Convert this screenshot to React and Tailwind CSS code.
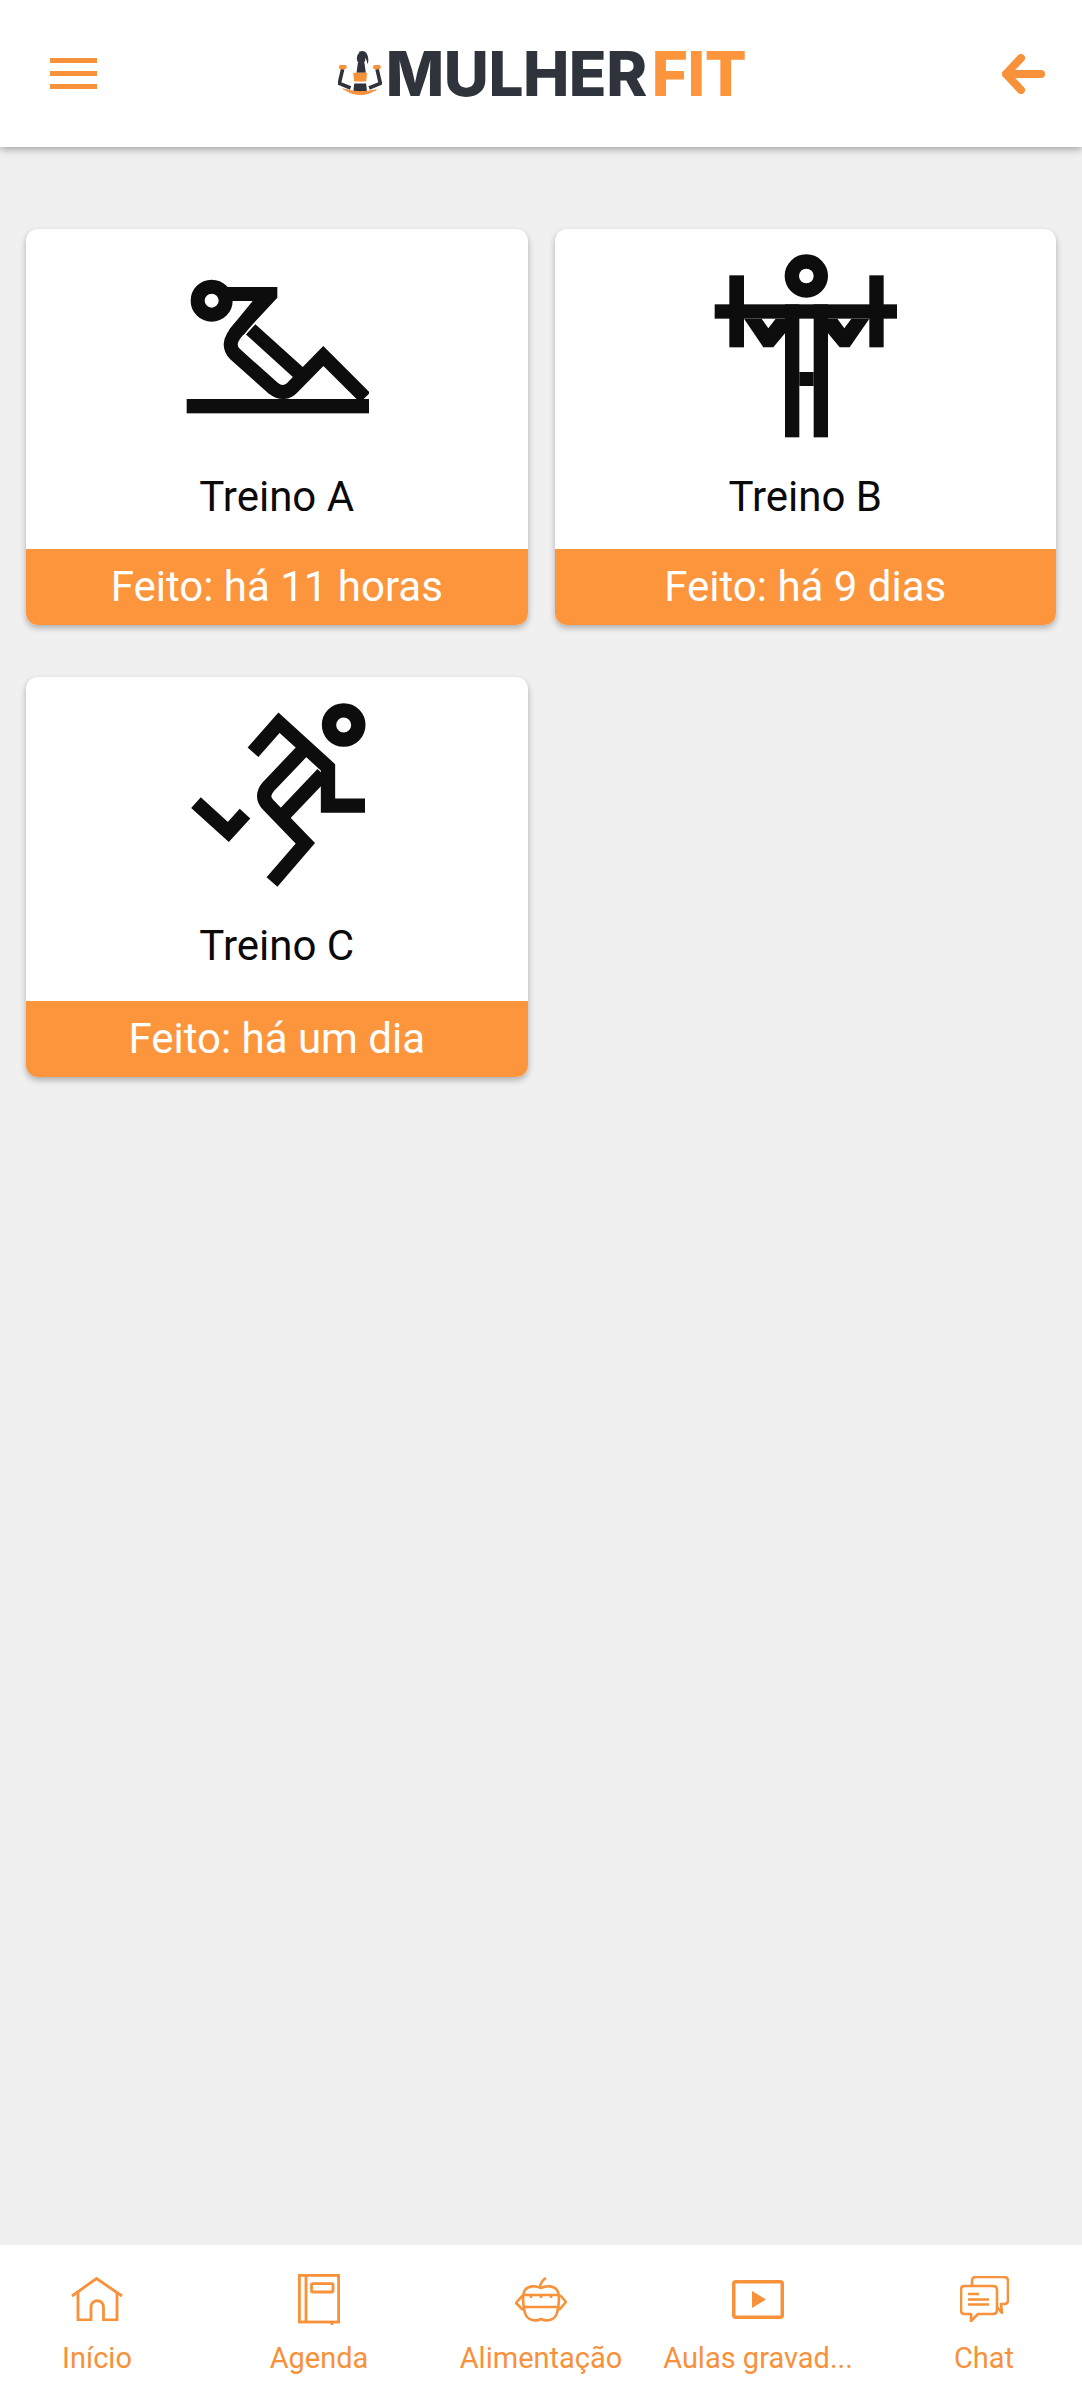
const workouts = [
  { name: "Treino A", done: "Feito: há 11 horas", icon: <SitUpIcon />, size: "h-[396px]", top: "pt-[25px]" },
  { name: "Treino B", done: "Feito: há 9 dias", icon: <WeightsIcon />, size: "h-[396px]", top: "pt-[25px]" },
  { name: "Treino C", done: "Feito: há um dia", icon: <RunnerIcon />, size: "h-[400px]", top: "pt-[26px]" },
];

function SitUpIcon() {
  return (
    <svg viewBox="0 0 552 552" className="block w-[184px] h-[184px]">
      <g transform="translate(-75 -12)" fill="none" stroke="#0d0d0d" strokeWidth="42">
        <circle cx="155" cy="152" r="42" />
        <path d="M200 111H352V143L285 215L250 255L207 240L278 153H200Z" fill="#0d0d0d" stroke="none" />
        <path d="M245 228Q212 262 212 283Q212 300 225 312L340 415Q372 440 400 410L490 318L615 443" />
        <path d="M272 238L420 372" />
        <rect x="80" y="447" width="550" height="43" fill="#0d0d0d" stroke="none" />
      </g>
    </svg>
  );
}

function WeightsIcon() {
  return (
    <svg viewBox="0 0 552 552" className="block w-[184px] h-[184px]">
      <g transform="translate(-67 -42)" fill="#0d0d0d">
        <circle cx="347" cy="108" r="43.5" fill="none" stroke="#0d0d0d" strokeWidth="43" />
        <rect x="72" y="193" width="550" height="43" />
        <rect x="116" y="106" width="44" height="216" />
        <rect x="536" y="106" width="43" height="216" />
        <rect x="283" y="193" width="43" height="399" />
        <rect x="369" y="193" width="43" height="399" />
        <rect x="326" y="396" width="43" height="42" />
        <path fillRule="evenodd" d="M160 236L218 322H248L283 280V236ZM213 236H255L233 265Z" />
        <path fillRule="evenodd" d="M412 236V280L447 322H477L536 236ZM440 236H482L461 265Z" />
      </g>
    </svg>
  );
}

function RunnerIcon() {
  return (
    <svg viewBox="0 0 552 552" className="block w-[184px] h-[184px]">
      <g transform="translate(-45 -39)" fill="none" stroke="#0d0d0d" strokeWidth="43">
        <circle cx="521" cy="105" r="44" />
        <path d="M249 187L327 98L474 232V347H585" />
        <path d="M395 185L295 290Q270 320 295 345L406 460L306 576" />
        <path d="M458 252L342 374" />
        <path d="M78 338L175 426L225 371" />
      </g>
    </svg>
  );
}

function LogoFigure() {
  return (
    <svg viewBox="0 0 133 140" className="block w-[44px] h-[47px]">
      <path d="M62 5Q78 -3 86 8Q95 22 90 42L84 24Z" fill="#2f333b" />
      <ellipse cx="70" cy="24" rx="13" ry="18" fill="#2f333b" />
      <path d="M60 38H80L84 68H56Z" fill="#2f333b" />
      <path d="M14 57L4 100L38 114M118 57L128 100L94 114" fill="none" stroke="#2f333b" strokeWidth="11" strokeLinejoin="round" />
      <path d="M46 68H88L85 94H49Z" fill="#f7913a" />
      <path d="M49 100H85L88 128H46Z" fill="#2f333b" />
      <path d="M16 117Q66 150 116 119Q66 132 16 117Z" fill="#f7913a" stroke="#f7913a" strokeWidth="3" />
      <rect x="3" y="44" width="23" height="13" rx="5" fill="#f7913a" />
      <rect x="106" y="44" width="23" height="13" rx="5" fill="#f7913a" />
    </svg>
  );
}

function HomeIcon() {
  return (
    <svg viewBox="0 0 52 44" fill="none" stroke="#f7913a" strokeWidth="2.8" className="w-[52px] h-[44px]">
      <path d="M1 19L25.5 1.5L51 19" />
      <path d="M7 15V43H20V30A6.2 6.2 0 0 1 32.5 30V43H46V15" />
    </svg>
  );
}

function BookIcon() {
  return (
    <svg viewBox="0 0 42 51" fill="none" stroke="#f7913a" strokeWidth="2.8" className="w-[42px] h-[51px]">
      <rect x="1.4" y="1.4" width="39.2" height="46.6" />
      <path d="M8 1.4V48M34 48V51" />
      <rect x="13.5" y="9.7" width="21.5" height="8.3" rx="1" />
    </svg>
  );
}

function AppleIcon() {
  return (
    <svg viewBox="0 0 52 45" fill="none" stroke="#f7913a" strokeWidth="2.6" strokeLinejoin="round" className="w-[52px] h-[45px]">
      <path d="M25 10Q26 4 31 1" />
      <path d="M26 11C20 8 13 9 10 13C7 17 8 30 10 36C12 43 20 45 26 42C32 45 40 43 42 36C44 30 45 17 42 13C39 9 32 8 26 11Z" />
      <path d="M9 18H44M9 30H44M16 18V21M26 18V21M36 18V21" />
      <path d="M8 18L1 26L8 33M45 18L51 25L44 33" />
    </svg>
  );
}

function PlayIcon() {
  return (
    <svg viewBox="0 0 52 39" fill="none" className="w-[52px] h-[39px]">
      <rect x="1.75" y="1.75" width="48.5" height="35.5" rx="2" stroke="#f7913a" strokeWidth="3.5" />
      <path d="M20 11L34 19.5L20 28Z" fill="#f7913a" />
    </svg>
  );
}

function ChatIcon() {
  return (
    <svg viewBox="0 0 49 46" fill="none" stroke="#f7913a" strokeWidth="2.6" strokeLinejoin="round" className="w-[49px] h-[46px]">
      <path d="M4 10H33Q37 10 37 14V34Q37 38 33 38H18L11 45V38H4Q1 38 1 34V14Q1 10 4 10Z" />
      <path d="M12 10V5Q12 1 16 1H44Q48 1 48 5V24Q48 28 44 28H41L42 37L37 31" />
      <path d="M8 18H19M8 23.5H29M8 28.5H29" />
    </svg>
  );
}

const navItems = [
  { label: "Início", icon: <HomeIcon />, box: "" },
  { label: "Agenda", icon: <BookIcon />, box: "" },
  { label: "Alimentação", icon: <AppleIcon />, box: "" },
  { label: "Aulas gravad...", icon: <PlayIcon />, box: "" },
  { label: "Chat", icon: <ChatIcon />, box: "pl-2" },
];

function WorkoutCard({ name, done, icon, size, top }) {
  return (
    <div className={`flex flex-col ${size} bg-white rounded-[12px] overflow-hidden shadow-[0_3px_6px_rgba(0,0,0,0.28)]`}>
      <div className={`flex-1 flex flex-col items-center ${top}`}>
        {icon}
        <div className="mt-[35px] text-[42px] leading-[48px] text-[#0a0a0a]">{name}</div>
      </div>
      <div className="h-[76px] flex items-center justify-center bg-[#fc953c] text-white text-[42px] leading-none">
        {done}
      </div>
    </div>
  );
}

export default function App() {
  return (
    <div className="h-[2402px] flex flex-col bg-[#f0f0f0] font-['Roboto',sans-serif]">
      <header className="relative z-10 h-[147px] shrink-0 bg-white flex items-center justify-between pl-[50px] pr-[37px] shadow-[0_2px_8px_rgba(0,0,0,0.35)]">
        <div className="flex flex-col gap-[8px] w-[47px]">
          <div className="h-[5px] bg-[#f7913a]" />
          <div className="h-[5px] bg-[#f7913a]" />
          <div className="h-[5px] bg-[#f7913a]" />
        </div>
        <div className="flex items-center ml-[-14px] font-['Inter',sans-serif] font-extrabold text-[62px] leading-none tracking-[-0.5px]">
          <LogoFigure />
          <span className="ml-[4px] text-[#2f333b]">MULHER</span>
          <span className="ml-[5px] text-[#fc953c]">FIT</span>
        </div>
        <svg viewBox="0 0 44 40" fill="none" stroke="#f7913a" strokeWidth="8" strokeLinecap="round" strokeLinejoin="round" className="w-[44px] h-[40px]">
          <path d="M5 20H40M20 4L5 20L20 36" />
        </svg>
      </header>

      <main className="flex-1 px-[26px] pt-[82px]">
        <div className="grid grid-cols-2 gap-x-[27px] gap-y-[52px]">
          {workouts.map((w) => (
            <WorkoutCard key={w.name} {...w} />
          ))}
        </div>
      </main>

      <nav className="h-[157px] shrink-0 bg-white grid grid-cols-[194px_250px_194px_240px_204px]">
        {navItems.map((item) => (
          <div key={item.label} className={`flex flex-col items-center pt-[28px] ${item.box}`}>
            <div className="h-[52px] flex items-center justify-center">{item.icon}</div>
            <div className="mt-[15px] text-[29px] leading-[36px] text-[#f7913a] whitespace-nowrap">{item.label}</div>
          </div>
        ))}
      </nav>
    </div>
  );
}
